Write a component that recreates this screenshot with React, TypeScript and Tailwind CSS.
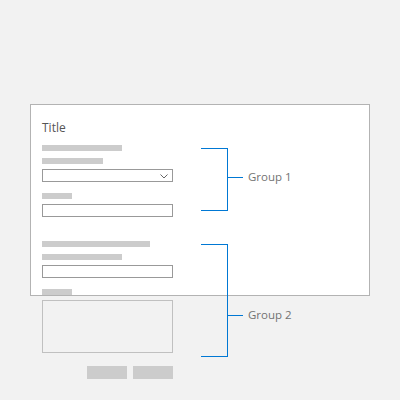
const bar = 'h-[6px] bg-[#cccccc]';

function Chevron() {
  return (
    <svg width="8" height="5" viewBox="0 0 8 5" className="absolute right-[4px] top-[4px]">
      <path d="M0.5 0.5 L4 4 L7.5 0.5" fill="none" stroke="#666" strokeWidth="1" />
    </svg>
  );
}

function Bracket({ top, height, tick, label }: { top: number; height: number; tick: number; label: string }) {
  return (
    <div className="absolute left-[201px]" style={{ top, height }}>
      <div className="h-full w-[27px] border-y border-r border-[#0078d4]" />
      <div className="absolute left-[26px] flex -translate-y-1/2 items-center" style={{ top: tick }}>
        <div className="h-px w-[16px] bg-[#0078d4]" />
        <span className="ml-[5px] whitespace-nowrap text-[11.5px] leading-[16px] text-[#737373]">{label}</span>
      </div>
    </div>
  );
}

export default function App() {
  return (
    <div className="relative h-[400px] w-[400px] bg-[#f2f2f2] font-['Open_Sans',sans-serif]">
      <div className="absolute left-0 top-0 pl-[30px] pt-[104px]">
        {/* card frame, content overflows below it */}
        <div className="h-[192px] w-[340px] border border-[#b3b3b3] bg-white px-[11px] pt-[15px]">
          <div className="text-[12px] leading-[16px] text-[#555]">Title</div>

          <div className="mt-[9px] flex w-[131px] flex-col">
            {/* group 1 */}
            <div className={`${bar} w-[80px]`} />
            <div className={`${bar} mt-[7px] w-[61px]`} />
            <div className="relative mt-[5px] h-[13px] border border-[#999] bg-white">
              <Chevron />
            </div>
            <div className={`${bar} mt-[11px] w-[30px]`} />
            <div className="mt-[5px] h-[13px] border border-[#999] bg-white" />

            {/* group 2 */}
            <div className={`${bar} mt-[24px] w-[108px]`} />
            <div className={`${bar} mt-[7px] w-[80px]`} />
            <div className="mt-[5px] h-[13px] border border-[#999] bg-white" />
            <div className={`${bar} mt-[11px] w-[30px]`} />
            <div className="mt-[5px] h-[53px] border border-[#c0c0c0]" />

            <div className="mt-[13px] flex justify-end gap-[6px]">
              <div className="h-[13px] w-[40px] bg-[#cccccc]" />
              <div className="h-[13px] w-[40px] bg-[#cccccc]" />
            </div>
          </div>
        </div>
      </div>

      <Bracket top={148} height={63} tick={29} label="Group 1" />
      <Bracket top={244} height={113} tick={71} label="Group 2" />
    </div>
  );
}
